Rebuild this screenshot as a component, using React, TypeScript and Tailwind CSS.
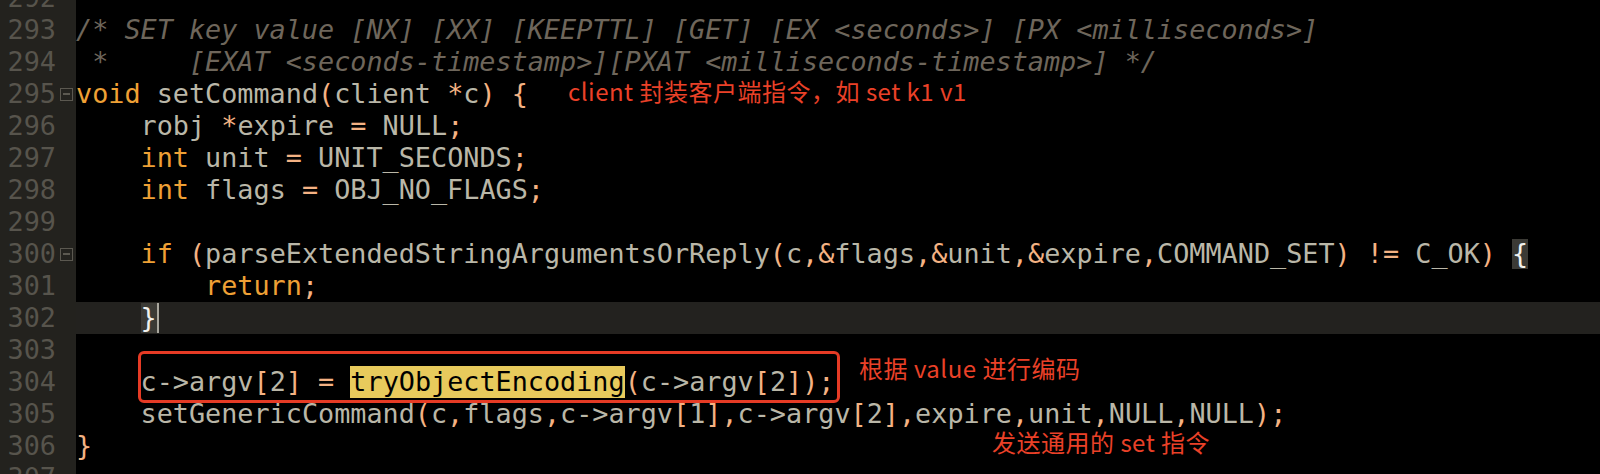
import React from "react";

type Special = { kind: "match" | "hl"; text: string; cursor?: boolean };
type Part = string | Special;
type Line = { n: number; fold?: boolean; comment?: string; parts?: Part[]; current?: boolean };

const KW = new Set(["void", "int", "if", "return"]);

const lines: Line[] = [
  { n: 292, parts: [""] },
  { n: 293, comment: "/* SET key value [NX] [XX] [KEEPTTL] [GET] [EX <seconds>] [PX <milliseconds>]" },
  { n: 294, comment: " *     [EXAT <seconds-timestamp>][PXAT <milliseconds-timestamp>] */" },
  { n: 295, fold: true, parts: ["void setCommand(client *c) {"] },
  { n: 296, parts: ["    robj *expire = NULL;"] },
  { n: 297, parts: ["    int unit = UNIT_SECONDS;"] },
  { n: 298, parts: ["    int flags = OBJ_NO_FLAGS;"] },
  { n: 299, parts: [""] },
  {
    n: 300,
    fold: true,
    parts: [
      "    if (parseExtendedStringArgumentsOrReply(c,&flags,&unit,&expire,COMMAND_SET) != C_OK) ",
      { kind: "match", text: "{" },
    ],
  },
  { n: 301, parts: ["        return;"] },
  { n: 302, current: true, parts: ["    ", { kind: "match", text: "}", cursor: true }] },
  { n: 303, parts: [""] },
  {
    n: 304,
    parts: ["    c->argv[2] = ", { kind: "hl", text: "tryObjectEncoding" }, "(c->argv[2]);"],
  },
  { n: 305, parts: ["    setGenericCommand(c,flags,c->argv[1],c->argv[2],expire,unit,NULL,NULL);"] },
  { n: 306, parts: ["}"] },
  { n: 307, parts: [""] },
];

function tokens(s: string) {
  return s.match(/->|[A-Za-z_0-9]+|\s+|./g) ?? [];
}

function Code({ s }: { s: string }) {
  return (
    <>
      {tokens(s).map((t, i) => {
        if (KW.has(t))
          return (
            <span key={i} className="text-[#efa035]">
              {t}
            </span>
          );
        if (/^\s+$/.test(t)) return <span key={i}>{t}</span>;
        if (t === "->" || /^[A-Za-z_0-9]+$/.test(t))
          return (
            <span key={i} className="text-[#bab7a8]">
              {t}
            </span>
          );
        return (
          <span key={i} className="text-[#f4b283]">
            {t}
          </span>
        );
      })}
    </>
  );
}

function FoldBox() {
  return (
    <span className="flex h-[13px] w-[13px] items-center justify-center border-[1.5px] border-[#5b5850]">
      <span className="h-[1.5px] w-[7px] bg-[#5b5850]" />
    </span>
  );
}

const mono = { fontFamily: "'DejaVu Sans Mono', monospace" };
const cjk = { fontFamily: "'Noto Sans CJK SC', sans-serif" };

export default function App() {
  return (
    <div className="relative h-[474px] w-[1600px] overflow-hidden bg-black">
      <div className="mt-[-18px] flex flex-col">
        {lines.map((l) => (
          <div key={l.n} className="flex h-[32px]">
            <div
              className="flex w-[76px] shrink-0 items-center bg-[#23221e] text-[26.8px] leading-[32px] text-[#57544c]"
              style={mono}
            >
              <span className="w-[56px] text-right">{l.n}</span>
              <span className="ml-[3px] flex w-[14px] items-center justify-center">
                {l.fold ? <FoldBox /> : null}
              </span>
            </div>
            <div
              className={`flex flex-1 items-center whitespace-pre text-[26.8px] leading-[32px] ${
                l.current ? "bg-[#23221f]" : ""
              }`}
              style={mono}
            >
              {l.comment ? (
                <span className="italic text-[#6e665b]">{l.comment}</span>
              ) : (
                l.parts?.map((p, i) =>
                  typeof p === "string" ? (
                    <Code key={i} s={p} />
                  ) : p.kind === "hl" ? (
                    <span key={i} className="bg-[#e8ca5c] text-black">
                      {p.text}
                    </span>
                  ) : (
                    <span key={i} className="flex h-[32px] items-center">
                      <span className="flex h-[30px] items-center bg-[#3b3a35] text-[#f2f2ee]">{p.text}</span>
                      {p.cursor ? <span className="h-[30px] w-[2px] bg-[#a9a79e]" /> : null}
                    </span>
                  )
                )
              )}
            </div>
          </div>
        ))}
      </div>

      <div className="absolute left-[138px] top-[351px] h-[52px] w-[702px] rounded-[6px] border-[3px] border-[#e63b25]" />

      <div
        className="absolute left-[568px] top-[77px] whitespace-pre text-[24px] leading-[28px] tracking-[0.5px] text-[#ea4128]"
        style={cjk}
      >
        client 封装客户端指令，如 set k1 v1
      </div>
      <div
        className="absolute left-[859px] top-[354px] whitespace-pre text-[24px] leading-[28px] tracking-[0.5px] text-[#ea4128]"
        style={cjk}
      >
        根据 value 进行编码
      </div>
      <div
        className="absolute left-[992px] top-[428px] whitespace-pre text-[24px] leading-[28px] tracking-[0.5px] text-[#ea4128]"
        style={cjk}
      >
        发送通用的 set 指令
      </div>
    </div>
  );
}
